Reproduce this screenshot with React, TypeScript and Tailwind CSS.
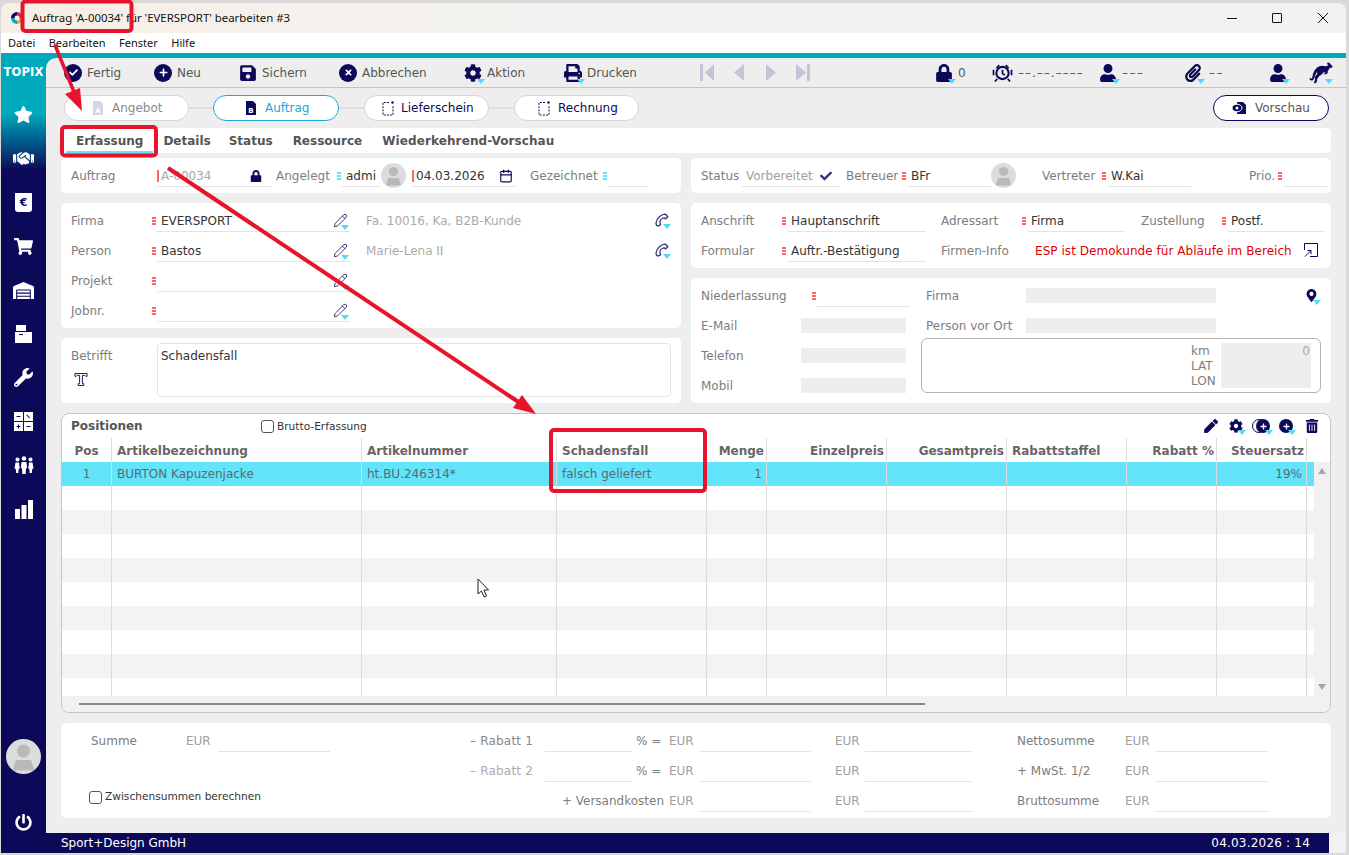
import type { ReactNode } from 'react'
import {
  FaStar,
  FaShoppingCart,
  FaWarehouse,
  FaWrench,
  FaPowerOff,
  FaSave,
  FaPrint,
  FaCog,
  FaLock,
  FaUser,
  FaPaperclip,
  FaPen,
  FaTrashAlt,
  FaPlus,
  FaCheck,
  FaTimes,
  FaMapMarkerAlt,
} from 'react-icons/fa'
import { FaHandshake } from 'react-icons/fa6'
import { Pencil, Calendar } from 'lucide-react'
import { GiKangaroo } from 'react-icons/gi'

function Drop() {
  return (
    <span className="absolute -bottom-[2px] -right-[3px] h-0 w-0 border-x-[4px] border-t-[5px] border-x-transparent border-t-[#4fdcfb]" />
  )
}

function Mark({ cyan }: { cyan?: boolean }) {
  const c = cyan ? 'bg-[#62e4fb]' : 'bg-[#f66]'
  return (
    <span className="mr-px mt-[7px] flex w-[4px] shrink-0 flex-col gap-px self-start">
      <span className={`h-[2px] ${c}`} />
      <span className={`h-[2px] ${c}`} />
      <span className={`h-[2px] ${c}`} />
    </span>
  )
}

function Bar() {
  return <span className="mr-[2px] h-[12px] w-[2px] shrink-0 bg-[#f66]" />
}

function Label({ className, children }: { className?: string; children: ReactNode }) {
  return <div className={`h-[21px] shrink-0 leading-[23px] text-[#7d7d7d] ${className ?? ''}`}>{children}</div>
}

function Field({ className, children }: { className?: string; children?: ReactNode }) {
  return (
    <div className={`flex h-[22px] shrink-0 items-center border-b border-[#e4e4e4] pl-[4px] text-[#333] ${className ?? ''}`}>
      {children}
    </div>
  )
}

function Avatar({ className }: { className?: string }) {
  return (
    <div className={`relative shrink-0 overflow-hidden rounded-full bg-[#dcdcdc] ${className ?? ''}`}>
      <svg viewBox="0 0 35 35" className="h-full w-full">
        <circle cx="17.5" cy="12" r="6.5" fill="#b9b9b9" />
        <path d="M10 21h15l3 9a2 2 0 0 1-1 1.5H8a2 2 0 0 1-1-1.5z" fill="#b9b9b9" />
      </svg>
    </div>
  )
}

function Phone() {
  return (
    <span className="relative ml-auto block h-[14px] w-[13px]">
      <svg viewBox="0 0 14 14" className="h-[14px] w-[14px]" fill="none" stroke="#3b3578" strokeWidth="1.3">
        <path d="M12.800 3.800 10.500 1.200C6.500 1 1.500 5.500 1 10c0 1.500.8 2.800 2 3l2.500-1.200-.6-2.800C5 7 7 5 9.200 4.800l1.500 1z" />
      </svg>
      <Drop />
    </span>
  )
}

function Pen() {
  return (
    <span className="relative ml-auto mr-[4px] block h-[15px] w-[13px]">
      <Pencil size={15} color="#3b3578" strokeWidth={1.6} />
      <Drop />
    </span>
  )
}

function ToolItem({ className, icon, children, drop }: { className: string; icon: ReactNode; children?: ReactNode; drop?: boolean }) {
  return (
    <div className={`flex shrink-0 items-center ${className}`}>
      <span className="relative flex h-[18px] w-[18px] items-center justify-center text-[18px] text-[#0c0959]">
        {icon}
        {drop && <Drop />}
      </span>
      <span className="ml-[5px] text-[#555]">{children}</span>
    </div>
  )
}

function Circle({ children }: { children: ReactNode }) {
  return <span className="flex h-[18px] w-[18px] items-center justify-center rounded-full bg-[#0c0959] text-[9px] text-white">{children}</span>
}

function DocIcon({ letter, tone }: { letter: string; tone: string }) {
  return (
    <svg viewBox="0 0 12 14" className="h-[14px] w-[12px]">
      <path d="M1 0h7l3 3v11H1z" fill={tone} />
      <text x="6" y="12" textAnchor="middle" fontSize="7" fontWeight="bold" fill="#fff" fontFamily="DejaVu Sans">
        {letter}
      </text>
    </svg>
  )
}

function DashDoc() {
  return (
    <svg viewBox="0 0 12 15" className="h-[15px] w-[12px]" fill="none" stroke="#0c0959">
      <path d="M7 1.5H1v12.5h10V5" strokeDasharray="2 1.2" />
      <circle cx="10.5" cy="1.5" r="1.2" fill="#0c0959" stroke="none" />
    </svg>
  )
}

function Pill({ className, icon, children }: { className: string; icon: ReactNode; children: ReactNode }) {
  return (
    <div className={`flex h-[26px] shrink-0 items-center rounded-full border bg-white ${className}`}>
      <span className="flex w-[12px] justify-center">{icon}</span>
      {children}
    </div>
  )
}

function SideIcon({ children }: { children: ReactNode }) {
  return <div className="flex h-[43.8px] items-center justify-center text-[19px] text-white">{children}</div>
}

const GRID = 'grid grid-cols-[50px_250px_195px_150px_60px_120px_120px_120px_90px_90px_7px]'
const CELL = 'border-r border-[#dcdcdc]'

const EMPTY_ROWS = [
  'h-[24px] bg-white',
  'h-[24px] bg-[#f3f3f3]',
  'h-[24px] bg-white',
  'h-[24px] bg-[#f3f3f3]',
  'h-[24px] bg-white',
  'h-[24px] bg-[#f3f3f3]',
  'h-[24px] bg-white',
  'h-[24px] bg-[#f3f3f3]',
  'h-[18px] bg-white',
]

function SumField({ className }: { className: string }) {
  return <div className={`h-[22px] shrink-0 border-b border-[#e4e4e4] ${className}`} />
}

function Eur({ className }: { className?: string }) {
  return <Label className={`w-[30px] !text-[#a0a0a0] ${className ?? ''}`}>EUR</Label>
}

function Check({ className }: { className?: string }) {
  return <span className={`h-[13px] w-[13px] shrink-0 rounded-[3px] border border-[#555] bg-white ${className ?? ''}`} />
}

export default function App() {
  return (
    <div className="relative h-[855px] w-[1349px] overflow-hidden bg-[#d9d9d9] font-['DejaVu_Sans',sans-serif] text-[12px]">
      <div className="ml-px mt-[3px] flex h-[850px] w-[1345px] flex-col overflow-hidden rounded-t-[8px]">
        {/* title bar */}
        <div className="flex h-[30px] shrink-0 items-center bg-linear-to-r from-[#f7efe5] to-[#f2f2f2] to-50% font-['Noto_Sans',sans-serif] text-[11.4px] text-[#111]">
          <svg viewBox="0 0 12 12" className="ml-[10px] mr-[9px] h-[12px] w-[12px]">
            <path d="M6 0a6 6 0 0 1 6 6H8.5A2.5 2.5 0 0 0 6 3.5z" fill="#e0245e" />
            <path d="M12 6a6 6 0 0 1-6 6V8.5A2.5 2.5 0 0 0 8.5 6z" fill="#f5a623" />
            <path d="M6 12a6 6 0 0 1-6-6h3.5A2.5 2.5 0 0 0 6 8.5z" fill="#00a8bc" />
            <path d="M0 6a6 6 0 0 1 6-6v3.5A2.5 2.5 0 0 0 3.5 6z" fill="#0c0959" />
          </svg>
          Auftrag 'A-00034' für 'EVERSPORT' bearbeiten #3
          <svg viewBox="0 0 10 1" className="ml-auto h-px w-[10px]" stroke="#111">
            <path d="M0 .5h10" />
          </svg>
          <span className="ml-[35px] h-[10px] w-[10px] rounded-[1px] border border-[#111]" />
          <svg viewBox="0 0 10 10" className="ml-[36px] mr-[18px] h-[10px] w-[10px]" stroke="#111">
            <path d="M0 0l10 10M10 0L0 10" />
          </svg>
        </div>
        {/* menu */}
        <div className="flex h-[20px] shrink-0 items-start gap-[13.5px] bg-white pl-[7px] pt-[2px] font-['Noto_Sans',sans-serif] text-[11px] text-[#111]">
          <span>Datei</span>
          <span>Bearbeiten</span>
          <span>Fenster</span>
          <span>Hilfe</span>
        </div>
        <div className="h-[5px] shrink-0 bg-[#00a8bc]" />

        <div className="flex min-h-0 flex-1 bg-linear-to-b from-[#00a8bc] from-[7%] to-[#0c0959] to-[14%]">
          {/* sidebar */}
          <aside className="flex w-[45px] shrink-0 flex-col">
            <div className="flex h-[30px] items-center justify-center text-[11.5px] font-bold tracking-[0.2px] text-white">TOPIX</div>
            <div className="mt-[5px]">
              <SideIcon>
                <FaStar />
              </SideIcon>
              <SideIcon>
                <FaHandshake className="text-[21px]" />
              </SideIcon>
              <SideIcon>
                <span className="flex h-[19px] w-[17px] items-center justify-center rounded-b-[3px] bg-white pt-[2px] text-[11px] font-bold text-[#0c0959]">€</span>
              </SideIcon>
              <SideIcon>
                <FaShoppingCart />
              </SideIcon>
              <SideIcon>
                <FaWarehouse className="text-[21px]" />
              </SideIcon>
              <SideIcon>
                <svg viewBox="0 0 18 18" className="h-[18px] w-[18px]" fill="#fff">
                  <path d="M1 0h10v6H1z" />
                  <path d="M0 7h17v11H0z" />
                  <path d="M4 9h4v1H4z" fill="#0c0959" />
                </svg>
              </SideIcon>
              <SideIcon>
                <FaWrench />
              </SideIcon>
              <SideIcon>
                <svg viewBox="0 0 19 19" className="h-[19px] w-[19px]">
                  <path d="M0 0h9v9H0zM10 0h9v9h-9zM0 10h9v9H0zM10 10h9v9h-9z" fill="#fff" />
                  <path d="M2.5 4h4v1h-4zM13 2.5l3 3-.7.7-3-3zM2.5 14h4v1h-4zM4 12.5h1v4H4zM12.5 14h4v1h-4z" fill="#0c0959" />
                </svg>
              </SideIcon>
              <SideIcon>
                <svg viewBox="0 0 20 18" className="h-[18px] w-[20px]" fill="#fff">
                  <circle cx="10" cy="2.5" r="2.3" />
                  <circle cx="3.5" cy="3.5" r="2" />
                  <circle cx="16.5" cy="3.5" r="2" />
                  <path d="M7.5 6h5l.7 6-1.2.5-.3 5.5H8.300l-.3-5.500-1.200-.5zM1.500 6.500h3.500l.7 6-1 .5-.3 4H2.100l-.3-4-1.300-.5zM15 6.500h3.500l1 6-1.300.5-.3 4h-2.300l-.3-4-1-.5z" />
                </svg>
              </SideIcon>
              <SideIcon>
                <svg viewBox="0 0 18 19" className="h-[19px] w-[18px]" fill="#fff">
                  <path d="M0 9h5v10H0zM6.500 5h5v14h-5zM13 0h5v19h-5z" />
                </svg>
              </SideIcon>
            </div>
            <Avatar className="ml-[5px] mt-auto h-[35px] w-[35px]" />
            <div className="mb-[22px] mt-[40px] flex justify-center text-[17px] text-white">
              <FaPowerOff />
            </div>
          </aside>

          <div className="flex min-w-0 flex-1 flex-col">
            <main className="h-[775px] shrink-0 rounded-tl-[10px] bg-[#eeeeee] px-[15px]">
              {/* toolbar */}
              <div className="-mx-[15px] flex h-[30px] items-center border-b border-[#c4c4c4] pl-[18px]">
                <ToolItem className="w-[90px]" icon={<Circle><FaCheck /></Circle>}>Fertig</ToolItem>
                <ToolItem className="w-[85px]" icon={<Circle><FaPlus /></Circle>}>Neu</ToolItem>
                <ToolItem className="w-[100px]" icon={<FaSave />}>Sichern</ToolItem>
                <ToolItem className="w-[125px]" icon={<Circle><FaTimes /></Circle>}>Abbrechen</ToolItem>
                <ToolItem className="w-[100px]" icon={<FaCog />} drop>Aktion</ToolItem>
                <ToolItem className="w-[136px]" icon={<FaPrint />} drop>Drucken</ToolItem>
                <svg viewBox="0 0 111 17" className="h-[17px] w-[111px] shrink-0" fill="#c5c3d8">
                  <path d="M0 0h3v17H0zM14 0v17L5 8.500zM44 0v17L34 8.500zM66 0v17l10-8.500zM96 0v17l10-8.500zM107 0h3v17h-3z" />
                </svg>
                <ToolItem className="ml-[124px] w-[57px]" icon={<FaLock />} drop>0</ToolItem>
                <ToolItem
                  className="w-[107px]"
                  icon={
                    <svg viewBox="0 0 21 19" className="ml-[3px] h-[18px] w-[21px] shrink-0" fill="none" stroke="#0c0959">
                      <circle cx="10.500" cy="9.500" r="6.500" strokeWidth="2.200" />
                      <path d="M10.500 6v4l2.500 1.500M4 4.500l3-3.500M17 4.500l-3-3.500M5 15.500l-2.500 3M16 15.500l2.500 3M1 6v6M20 6v6" strokeWidth="1.800" />
                    </svg>
                  }
                >
                  <span className="ml-[3px] tracking-[1px]">––.––.––––</span>
                </ToolItem>
                <ToolItem className="w-[85px]" icon={<FaUser />} drop>
                  <span className="tracking-[1.500px]">–––</span>
                </ToolItem>
                <ToolItem className="w-[85px]" icon={<FaPaperclip />} drop>
                  <span className="ml-[2px] tracking-[1.500px]">––</span>
                </ToolItem>
                <ToolItem className="w-[43px]" icon={<FaUser />} drop />
                <ToolItem className="w-[22px]" icon={<GiKangaroo className="shrink-0 text-[24px]" stroke="currentColor" strokeWidth={22} />} drop />
              </div>

              {/* stepper */}
              <div className="-ml-px mt-[7px] flex items-center pl-[4px]">
                <Pill className="w-[125px] border-[#d6d6d6] pl-[27px] text-[#8a8a8a]" icon={<DocIcon letter="A" tone="#d5d4e6" />}>
                  <span className="ml-[8px]">Angebot</span>
                </Pill>
                <span className="h-[2px] w-[24px] bg-[#dedede]" />
                <Pill className="w-[126px] border-[#22a7dc] pl-[31px] text-[#22a7dc]" icon={<DocIcon letter="B" tone="#0c0959" />}>
                  <span className="ml-[8px]">Auftrag</span>
                </Pill>
                <span className="h-[2px] w-[25px] bg-[#dedede]" />
                <Pill className="w-[125px] border-[#d6d6d6] pl-[17px] text-[#0c0959]" icon={<DashDoc />}>
                  <span className="ml-[7px]">Lieferschein</span>
                </Pill>
                <span className="h-[2px] w-[25px] bg-[#dedede]" />
                <Pill className="w-[125px] border-[#d6d6d6] pl-[23px] text-[#0c0959]" icon={<DashDoc />}>
                  <span className="ml-[8px]">Rechnung</span>
                </Pill>
                <div className="ml-auto mr-[2px] flex h-[26px] w-[116px] items-center rounded-full border border-[#0c0959] bg-white pl-[18px] text-[#555]">
                  <svg viewBox="0 0 14 12" className="mr-[9px] h-[12px] w-[14px]">
                    <path d="M5 0h6l3 3v9H5z" fill="#0c0959" />
                    <ellipse cx="5" cy="6" rx="5" ry="3.800" fill="#0c0959" stroke="#fff" />
                    <circle cx="5" cy="6" r="1.500" fill="#fff" />
                  </svg>
                  Vorschau
                </div>
              </div>

              {/* tabs */}
              <div className="mt-[7px] flex h-[25px] items-center rounded-[5px] bg-white pl-[15px] font-bold text-[#555]">
                <span className="relative mr-[20px]">
                  Erfassung
                  <span className="absolute -left-[10px] -right-[10px] top-[19px] h-[3px] bg-[#62e4fb]" />
                </span>
                <span className="mr-[18px]">Details</span>
                <span className="mr-[20px]">Status</span>
                <span className="mr-[20px]">Ressource</span>
                <span className="tracking-[0.1px]">Wiederkehrend-Vorschau</span>
              </div>

              {/* head row */}
              <div className="mt-[5px] flex gap-[10px]">
                <div className="flex h-[35px] w-[620px] items-start rounded-[5px] bg-white pl-[10px] pt-[7px]">
                  <Label className="w-[86px]">Auftrag</Label>
                  <Field className="w-[114px] !pl-0">
                    <Bar />
                    <span className="text-[#a8a8a8]">A-00034</span>
                    <FaLock className="ml-auto mr-[9px] text-[12px] text-[#0c0959]" />
                  </Field>
                  <Label className="ml-[5px] w-[61px]">Angelegt</Label>
                  <Mark cyan />
                  <Field className="w-[39px]">admi</Field>
                  <Avatar className="-mt-[2px] h-[25px] w-[25px]" />
                  <Field className="ml-[5px] w-[105px] !pl-px">
                    <Bar />
                    <span>04.03.2026</span>
                    <Calendar size={14} color="#0c0959" className="ml-auto mr-[3px]" />
                  </Field>
                  <Label className="ml-[14px] w-[73px]">Gezeichnet</Label>
                  <Mark cyan />
                  <Field className="w-[40px]" />
                </div>
                <div className="flex h-[35px] w-[640px] items-start rounded-[5px] bg-white pl-[10px] pt-[7px]">
                  <Label className="w-[41px]">Status</Label>
                  <Field className="w-[98px] !text-[#a0a0a0]">
                    Vorbereitet
                    <FaCheck className="ml-auto mr-[8px] text-[12px] text-[#3b3578]" />
                  </Field>
                  <Label className="ml-[6px] w-[56px]">Betreuer</Label>
                  <Mark />
                  <Field className="w-[84px]">BFr</Field>
                  <Avatar className="-mt-[2px] h-[25px] w-[25px]" />
                  <Label className="ml-[26px] w-[60px]">Vertreter</Label>
                  <Mark />
                  <Field className="w-[84px]">W.Kai</Field>
                  <Label className="ml-[58px] w-[29px]">Prio.</Label>
                  <Mark />
                  <Field className="w-[44px]" />
                </div>
              </div>

              <div className="mt-[10px] flex gap-[10px]">
                <div className="flex w-[620px] flex-col gap-[10px]">
                  <div className="flex h-[125px] flex-col gap-[8px] rounded-[5px] bg-white pl-[10px] pt-[7px]">
                    <div className="flex">
                      <Label className="w-[81px]">Firma</Label>
                      <Mark />
                      <Field className="w-[193px]">
                        EVERSPORT
                        <Pen />
                      </Field>
                      <Label className="ml-[16px] w-[280px] !text-[#aaa]">Fa. 10016, Ka, B2B-Kunde</Label>
                      <div className="mt-[3px] w-[22px]">
                        <Phone />
                      </div>
                    </div>
                    <div className="flex">
                      <Label className="w-[81px]">Person</Label>
                      <Mark />
                      <Field className="w-[193px]">
                        Bastos
                        <Pen />
                      </Field>
                      <Label className="ml-[16px] w-[280px] !text-[#aaa]">Marie-Lena II</Label>
                      <div className="mt-[3px] w-[22px]">
                        <Phone />
                      </div>
                    </div>
                    <div className="flex">
                      <Label className="w-[81px]">Projekt</Label>
                      <Mark />
                      <Field className="w-[193px]">
                        <Pen />
                      </Field>
                    </div>
                    <div className="flex">
                      <Label className="w-[81px]">Jobnr.</Label>
                      <Mark />
                      <Field className="w-[193px]">
                        <Pen />
                      </Field>
                    </div>
                  </div>
                  <div className="flex h-[65px] rounded-[5px] bg-white pl-[10px] pt-[5px]">
                    <div className="w-[86px] pt-[2px]">
                      <Label>Betrifft</Label>
                      <svg viewBox="0 0 14 14" className="ml-[3px] mt-[7px] h-[13px] w-[14px]" fill="none" stroke="#0c0959">
                        <path d="M.5.500h13v3h-1.500l-1-1H8.500v9H10v2H4v-2h1.500v-9H3l-1 1H.5z" />
                      </svg>
                    </div>
                    <div className="h-[54px] w-[514px] rounded-[4px] border border-[#e4e4e4] pl-[3px] pt-[2px] leading-[21px] text-[#333]">Schadensfall</div>
                  </div>
                </div>

                <div className="flex w-[640px] flex-col gap-[10px]">
                  <div className="flex h-[65px] flex-col gap-[8px] rounded-[5px] bg-white pl-[10px] pt-[7px]">
                    <div className="flex">
                      <Label className="w-[81px]">Anschrift</Label>
                      <Mark />
                      <Field className="w-[139px]">Hauptanschrift</Field>
                      <Label className="ml-[15px] w-[81px]">Adressart</Label>
                      <Mark />
                      <Field className="w-[98px]">Firma</Field>
                      <Label className="ml-[16px] w-[81px]">Zustellung</Label>
                      <Mark />
                      <Field className="w-[98px]">Postf.</Field>
                    </div>
                    <div className="flex">
                      <Label className="w-[81px]">Formular</Label>
                      <Mark />
                      <Field className="w-[139px]">Auftr.-Bestätigung</Field>
                      <Label className="ml-[15px] w-[94px]">Firmen-Info</Label>
                      <Label className="w-[269px] tracking-[0.05px] !text-[#e00000]">ESP ist Demokunde für Abläufe im Bereich</Label>
                      <svg viewBox="0 0 14 14" className="mt-[3px] h-[14px] w-[14px]" fill="none" stroke="#0c0959">
                        <path d="M.5 7V.5h13v13H6" />
                        <path d="M1 13.500 7 7.500M3.500 7.500H7V11" />
                      </svg>
                    </div>
                  </div>
                  <div className="flex h-[125px] rounded-[5px] bg-white pl-[10px] pt-[10px]">
                    <div className="flex w-[220px] flex-col gap-[15px]">
                      <div className="flex h-[15px]">
                        <Label className="-mt-[3px] w-[111px]">Niederlassung</Label>
                        <span className="-mt-[3px]">
                          <Mark />
                        </span>
                        <Field className="-mt-[3px] w-[93px]" />
                      </div>
                      <div className="flex h-[15px]">
                        <Label className="-mt-[3px] w-[100px]">E-Mail</Label>
                        <div className="h-[15px] w-[105px] bg-[#eeeeee]" />
                      </div>
                      <div className="flex h-[15px]">
                        <Label className="-mt-[3px] w-[100px]">Telefon</Label>
                        <div className="h-[15px] w-[105px] bg-[#eeeeee]" />
                      </div>
                      <div className="flex h-[15px]">
                        <Label className="-mt-[3px] w-[100px]">Mobil</Label>
                        <div className="h-[15px] w-[105px] bg-[#eeeeee]" />
                      </div>
                    </div>
                    <div className="flex w-[400px] flex-col">
                      <div className="flex h-[15px] pl-[5px]">
                        <Label className="-mt-[3px] w-[100px]">Firma</Label>
                        <div className="h-[15px] w-[190px] bg-[#eeeeee]" />
                        <span className="relative ml-[89px] mt-[1px] text-[13px] text-[#0c0959]">
                          <FaMapMarkerAlt />
                          <Drop />
                        </span>
                      </div>
                      <div className="mt-[15px] flex h-[15px] pl-[5px]">
                        <Label className="-mt-[3px] w-[100px]">Person vor Ort</Label>
                        <div className="h-[15px] w-[190px] bg-[#eeeeee]" />
                      </div>
                      <div className="mt-[5px] flex h-[55px] rounded-[6px] border border-[#b5b5b5] pl-[269px] pt-[4px]">
                        <div className="w-[30px] text-[#7d7d7d]">
                          <div className="h-[15px] leading-[17px]">km</div>
                          <div className="h-[15px] leading-[17px]">LAT</div>
                          <div className="h-[15px] leading-[17px]">LON</div>
                        </div>
                        <div className="h-[45px] w-[90px] bg-[#eeeeee] pr-[1px] text-right leading-[17px] text-[#aaa]">0</div>
                      </div>
                    </div>
                  </div>
                </div>
              </div>

              {/* positions */}
              <section className="mt-[10px] h-[300px] overflow-hidden rounded-[8px] border border-[#c4c4c4] bg-white">
                <div className="flex h-[24px] items-center pl-[9px]">
                  <span className="w-[190px] font-bold text-[#555]">Positionen</span>
                  <Check className="mr-[3px]" />
                  <span className="pt-[2px] text-[10.6px] text-[#333]">Brutto-Erfassung</span>
                  <div className="ml-auto mr-[11px] flex items-center text-[14px] text-[#0c0959]">
                    <FaPen />
                    <span className="relative ml-[11px]">
                      <FaCog />
                      <Drop />
                    </span>
                    <span className="relative ml-[9px] flex h-[14px] w-[18px] items-center justify-end">
                      <span className="absolute left-0 h-[14px] w-[14px] rounded-full border border-[#0c0959] bg-white" />
                      <span className="relative flex h-[14px] w-[14px] items-center justify-center rounded-full bg-[#0c0959] text-[7px] text-white">
                        <FaPlus />
                      </span>
                      <Drop />
                    </span>
                    <span className="relative ml-[9px] flex h-[14px] w-[14px] items-center justify-center rounded-full bg-[#0c0959] text-[7px] text-white">
                      <FaPlus />
                      <Drop />
                    </span>
                    <FaTrashAlt className="ml-[12px]" />
                  </div>
                </div>
                <div className={`${GRID} h-[24px] font-bold leading-[26px] text-[#666]`}>
                  <div className={`${CELL} text-center`}>Pos</div>
                  <div className={`${CELL} pl-[5px]`}>Artikelbezeichnung</div>
                  <div className={`${CELL} pl-[5px]`}>Artikelnummer</div>
                  <div className={`${CELL} pl-[5px]`}>Schadensfall</div>
                  <div className={`${CELL} pr-[2px] text-right`}>Menge</div>
                  <div className={`${CELL} pr-[2px] text-right`}>Einzelpreis</div>
                  <div className={`${CELL} pr-[2px] text-right`}>Gesamtpreis</div>
                  <div className={`${CELL} pl-[5px]`}>Rabattstaffel</div>
                  <div className={`${CELL} pr-[2px] text-right`}>Rabatt %</div>
                  <div className={`${CELL} pr-[2px] text-right`}>Steuersatz</div>
                  <div />
                </div>
                <div className="flex h-[234px]">
                  <div className="w-[1252px] shrink-0">
                    <div className={`${GRID} h-[24px] bg-[#62e4fb] leading-[24px] text-[#5a6a70]`}>
                      <div className={`${CELL} text-center`}>1</div>
                      <div className={`${CELL} pl-[5px]`}>BURTON Kapuzenjacke</div>
                      <div className={`${CELL} pl-[5px]`}>ht.BU.246314*</div>
                      <div className={`${CELL} pl-[5px]`}>falsch geliefert</div>
                      <div className={`${CELL} pr-[4px] text-right`}>1</div>
                      <div className={CELL} />
                      <div className={CELL} />
                      <div className={CELL} />
                      <div className={CELL} />
                      <div className={`${CELL} pr-[4px] text-right`}>19%</div>
                      <div />
                    </div>
                    {EMPTY_ROWS.map((row, i) => (
                      <div key={i} className={`${GRID} ${row}`}>
                        <div className={CELL} />
                        <div className={CELL} />
                        <div className={CELL} />
                        <div className={CELL} />
                        <div className={CELL} />
                        <div className={CELL} />
                        <div className={CELL} />
                        <div className={CELL} />
                        <div className={CELL} />
                        <div className={CELL} />
                        <div />
                      </div>
                    ))}
                  </div>
                  <div className="flex w-[16px] flex-col items-center justify-between bg-[#f1f1f1] py-[6px]">
                    <span className="h-0 w-0 border-x-[4px] border-b-[6px] border-x-transparent border-b-[#a5a5a5]" />
                    <span className="h-0 w-0 border-x-[4px] border-t-[6px] border-x-transparent border-t-[#a5a5a5]" />
                  </div>
                </div>
                <div className="flex h-[16px] items-center bg-[#f1f1f1] pl-[17px]">
                  <div className="h-[2px] w-[846px] bg-[#888]" />
                </div>
              </section>

              {/* totals */}
              <section className="mt-[10px] flex h-[95px] flex-col gap-[8px] rounded-[5px] bg-white pt-[7px]">
                <div className="flex">
                  <Label className="ml-[30px] w-[95px]">Summe</Label>
                  <Eur className="!w-[32px]" />
                  <SumField className="w-[112px]" />
                  <div className="flex w-[339px] shrink-0">
                    <Label className="ml-[140px] w-[75px] tracking-[0.2px] !text-[#888]">– Rabatt 1</Label>
                    <SumField className="w-[87px]" />
                    <Label className="ml-[4px]">% =</Label>
                  </div>
                  <Eur />
                  <SumField className="w-[112px]" />
                  <Eur className="ml-[24px]" />
                  <SumField className="w-[107px]" />
                  <Label className="ml-[45px] w-[108px]">Nettosumme</Label>
                  <Eur />
                  <SumField className="w-[113px]" />
                </div>
                <div className="flex">
                  <div className="w-[269px] shrink-0" />
                  <div className="flex w-[339px] shrink-0">
                    <Label className="ml-[140px] w-[75px] tracking-[0.2px] !text-[#aaa]">– Rabatt 2</Label>
                    <SumField className="w-[87px]" />
                    <Label className="ml-[4px]">% =</Label>
                  </div>
                  <Eur />
                  <SumField className="w-[112px]" />
                  <Eur className="ml-[24px]" />
                  <SumField className="w-[107px]" />
                  <Label className="ml-[45px] w-[108px]">+ MwSt. 1/2</Label>
                  <Eur />
                  <SumField className="w-[113px]" />
                </div>
                <div className="flex">
                  <div className="flex h-[14px] w-[269px] shrink-0 items-center pl-[28px] text-[10.6px] text-[#333]">
                    <Check className="mr-[3px]" />
                    Zwischensummen berechnen
                  </div>
                  <div className="w-[334px] shrink-0 text-right">
                    <Label>+ Versandkosten</Label>
                  </div>
                  <Eur className="ml-[5px]" />
                  <SumField className="w-[112px]" />
                  <Eur className="ml-[24px]" />
                  <SumField className="w-[107px]" />
                  <Label className="ml-[45px] w-[108px]">Bruttosumme</Label>
                  <Eur />
                  <SumField className="w-[113px]" />
                </div>
              </section>
            </main>
            {/* status bar */}
            <footer className="flex h-[20px] shrink-0 items-center bg-[#0c0959] pl-[15px] text-white">
              Sport+Design GmbH
              <span className="ml-auto mr-[19px] tracking-[0.2px]">04.03.2026 : 14</span>
              <span className="h-[20px] w-[17px] bg-[#f1f1f1]" />
            </footer>
          </div>
        </div>
      </div>

      {/* annotations drawn over the screenshot */}
      <svg className="pointer-events-none absolute inset-0 h-[855px] w-[1349px]" viewBox="0 0 1349 855" fill="none">
        <rect x="22.500" y="1.500" width="109" height="29.500" rx="3" stroke="#e6152d" strokeWidth="4" />
        <rect x="62" y="127" width="94" height="28.500" rx="3" stroke="#e6152d" strokeWidth="4" />
        <rect x="551" y="430" width="154" height="61" rx="3" stroke="#e6152d" strokeWidth="4" />
        <path d="M55 45L74 92" stroke="#e6152d" strokeWidth="3.500" />
        <path d="M82 111L65 94L80 88z" fill="#e6152d" />
        <path d="M168 168L520 403" stroke="#e6152d" strokeWidth="4" />
        <path d="M536 414L513 408L522 395z" fill="#e6152d" />
        <path d="M478 579v15l3.500-3 2.500 6 2.500-1-2.500-6h4.500z" fill="#fff" stroke="#222" />
      </svg>
    </div>
  )
}
